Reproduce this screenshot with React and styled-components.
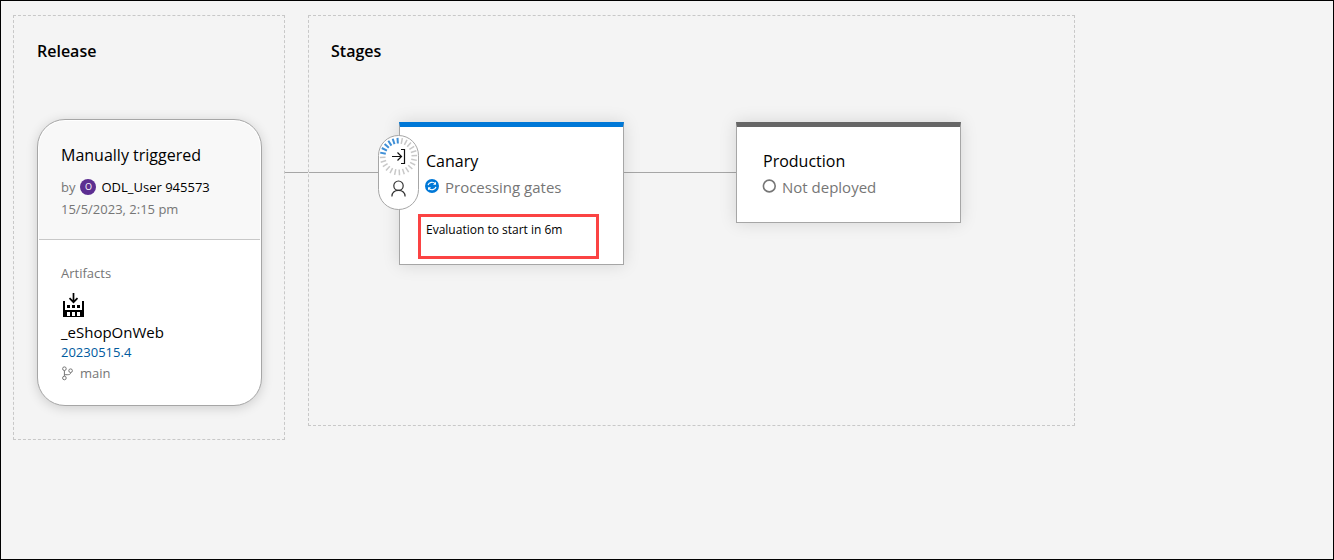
import React from 'react';
import styled, { createGlobalStyle } from 'styled-components';

const GlobalStyle = createGlobalStyle`
  *, *::before, *::after { box-sizing: border-box; }
  body {
    margin: 0;
    background: #f4f4f4;
    color: #000;
    font-family: "Open Sans", "Noto Sans", sans-serif;
    font-size: 13px;
    line-height: 20px;
  }
  h1, h2, h3, p { margin: 0; }
`;

const Page = styled.main`
  min-height: 100vh;
  padding: 14px 12px;
  border: 1px solid #000;
  overflow-x: auto;
`;

const Pipeline = styled.div`
  display: flex;
  align-items: flex-start;
`;

const Panel = styled.section`
  flex: none;
  padding: 23px ${(p) => p.$right} ${(p) => p.$bottom} 0;
  border: 1px dashed #c8c8c8;
`;

const PanelTitle = styled.h2`
  padding-left: ${(p) => p.$indent};
  margin-bottom: 56px;
  font-size: 16px;
  font-weight: 600;
  line-height: 24px;
`;

const Track = styled.div`
  display: flex;
  align-items: flex-start;
`;

const Connector = styled.div`
  flex: none;
  width: ${(p) => p.$length};
  height: 1px;
  margin-top: ${(p) => p.$top};
  background: #a6a6a6;
`;

const ReleaseCard = styled.article`
  width: 225px;
  margin-left: 23px;
  border: 1px solid #a6a6a6;
  border-radius: 28px;
  background: #fff;
  box-shadow: 0 2px 12px rgba(0, 0, 0, 0.16);
`;

const Trigger = styled.div`
  margin: 1px;
  padding: 22px 22px 20px;
  border-bottom: 1px solid #c8c8c8;
  border-radius: 26px 26px 0 0;
  background: #f8f8f8;
`;

const CardTitle = styled.h3`
  font-size: 16px;
  font-weight: 400;
  line-height: 24px;
`;

const Byline = styled.p`
  display: flex;
  align-items: center;
  gap: 5px;
  margin-top: 10px;
  color: #767676;
`;

const Avatar = styled.span`
  width: 16px;
  height: 16px;
  border-radius: 50%;
  background: #5c2e91;
  color: #fff;
  font-size: 9px;
  line-height: 16px;
  text-align: center;
`;

const UserName = styled.span`
  color: #000;
`;

const Muted = styled.p`
  margin-top: 2px;
  color: #767676;
`;

const Artifacts = styled.div`
  padding: 20px 23px 22px;
`;

const ArtifactIcon = styled.svg`
  display: block;
  margin-top: 9px;
`;

const ArtifactName = styled.p`
  margin-top: 5px;
  font-size: 15px;
`;

const BuildLink = styled.a`
  display: block;
  color: #005a9e;
  text-decoration: none;
`;

const Branch = styled.p`
  display: flex;
  align-items: center;
  gap: 7px;
  margin-top: 1px;
  color: #767676;
`;

const StageCard = styled.article`
  position: relative;
  flex: none;
  width: 225px;
  margin-top: 3px;
  padding: 22px 0 ${(p) => p.$bottom};
  border: 1px solid #a6a6a6;
  border-top: 5px solid ${(p) => p.$accent};
  background: #fff;
  box-shadow: 0 0 16px rgba(0, 0, 0, 0.13);
`;

const StageTitle = styled(CardTitle)`
  padding: 0 26px;
`;

const Status = styled.p`
  display: flex;
  align-items: center;
  gap: 6px;
  margin-top: 4px;
  padding: 0 26px 0 25px;
  color: #767676;
  font-size: 15px;

  svg { flex: none; }
`;

const Notice = styled.p`
  margin: 17px 24px 0 18px;
  padding: 3px 5px 16px;
  border: 3px solid #fb4343;
  font-size: 12px;
  font-weight: 370;
`;

const Conditions = styled.div`
  position: absolute;
  top: 8px;
  left: -22px;
  display: flex;
  flex-direction: column;
  width: 41px;
  height: 75px;
  border: 1px solid #a6a6a6;
  border-radius: 21px;
  background: #fff;
`;

const ConditionButton = styled.button`
  display: block;
  height: ${(p) => p.$height};
  padding: 0;
  border: 0;
  background: none;
  cursor: pointer;

  svg { display: block; margin: 0 auto; }
`;

const TICKS = 24;
const ACTIVE_TICKS = 6;

function GatesIcon() {
  return (
    <svg width="39" height="40" viewBox="0 0 39 40" fill="none" aria-hidden="true">
      {Array.from({ length: TICKS }, (_, i) => (
        <line
          key={i}
          x1="19.5"
          y1="1.8"
          x2="19.5"
          y2="7.5"
          stroke={i < ACTIVE_TICKS ? '#3f8fd6' : '#c8c8c8'}
          strokeWidth={i < ACTIVE_TICKS ? 2 : 1.5}
          transform={`rotate(${(i * -360) / TICKS - 3} 19.5 20.5)`}
        />
      ))}
      <path d="M13 20.5H22.5M18.5 16.5L22.5 20.5L18.5 24.5M22 13.5H25.5V27.5H22" stroke="#111" strokeWidth="1.2" />
    </svg>
  );
}

function ApproverIcon() {
  return (
    <svg width="16" height="17" viewBox="0 0 16 17" fill="none" stroke="#333" strokeWidth="1.2" aria-hidden="true">
      <circle cx="7.5" cy="5.7" r="4.7" />
      <path d="M0.9 16.5C1.1 12.6 3.9 10.4 7.5 10.4S13.9 12.6 14.1 16.5" />
    </svg>
  );
}

function RunningIcon() {
  return (
    <svg width="14" height="20" viewBox="0 0 14 20" fill="none" aria-hidden="true">
      <circle cx="7" cy="9" r="7" fill="#0078d7" />
      <path d="M3 8.2C3.8 5.2 8 4.2 10.2 6.6M11 9.8C10.2 12.8 6 13.8 3.8 11.4" stroke="#fff" strokeWidth="1.2" />
      <path d="M11 4.8V7.8H8ZM3 13.2V10.2H6Z" fill="#fff" />
    </svg>
  );
}

function IdleIcon() {
  return (
    <svg width="14" height="20" viewBox="0 0 14 20" fill="none" aria-hidden="true">
      <circle cx="7.3" cy="9" r="5.9" stroke="#767676" strokeWidth="1.6" />
    </svg>
  );
}

function BranchIcon() {
  return (
    <svg width="12" height="15" viewBox="0 0 12 15" fill="none" stroke="#767676" aria-hidden="true">
      <circle cx="3.4" cy="2.7" r="1.8" />
      <circle cx="3.4" cy="12" r="1.8" />
      <circle cx="9.6" cy="4.7" r="1.8" />
      <path d="M3.4 4.6V10.1M9.6 6.6C9.6 9 7.8 8.7 3.4 8.7" />
    </svg>
  );
}

function BuildIcon() {
  return (
    <ArtifactIcon width="23" height="25" viewBox="0 0 23 25" aria-hidden="true">
      <path d="M12.5 1V10M8.5 6.2L12.5 10.2L16.5 6.2" fill="none" stroke="#000" strokeWidth="1.7" />
      <path
        fillRule="evenodd"
        d="M2 9H4V18H21V9H23V25H2ZM6 20V24H9V20ZM11 20V24H14V20ZM16 20V24H19V20Z"
      />
      <path d="M6 13H9V16H6ZM11 13H14V16H11ZM16 13H19V16H16Z" />
    </ArtifactIcon>
  );
}

export default function App() {
  return (
    <>
      <GlobalStyle />
      <Page>
        <Pipeline>
          <Panel $right="22px" $bottom="33px">
            <PanelTitle $indent="23px">Release</PanelTitle>
            <ReleaseCard>
              <Trigger>
                <CardTitle>Manually triggered</CardTitle>
                <Byline>
                  by <Avatar>O</Avatar> <UserName>ODL_User 945573</UserName>
                </Byline>
                <Muted>15/5/2023, 2:15 pm</Muted>
              </Trigger>
              <Artifacts>
                <Muted>Artifacts</Muted>
                <BuildIcon />
                <ArtifactName>_eShopOnWeb</ArtifactName>
                <BuildLink href="#build">20230515.4</BuildLink>
                <Branch>
                  <BranchIcon /> main
                </Branch>
              </Artifacts>
            </ReleaseCard>
          </Panel>

          <Connector $length="23px" $top="157px" />

          <Panel $right="113px" $bottom="160px">
            <PanelTitle $indent="22px">Stages</PanelTitle>
            <Track>
              <Connector $length="90px" $top="53px" />
              <StageCard $accent="#0078d7" $bottom="5px">
                <StageTitle>Canary</StageTitle>
                <Status>
                  <RunningIcon /> Processing gates
                </Status>
                <Notice>Evaluation to start in 6m</Notice>
                <Conditions>
                  <ConditionButton type="button" $height="40px" aria-label="Pre-deployment gates">
                    <GatesIcon />
                  </ConditionButton>
                  <ConditionButton type="button" $height="25px" aria-label="Pre-deployment approvers">
                    <ApproverIcon />
                  </ConditionButton>
                </Conditions>
              </StageCard>
              <Connector $length="112px" $top="53px" />
              <StageCard $accent="#666" $bottom="25px">
                <StageTitle>Production</StageTitle>
                <Status>
                  <IdleIcon /> Not deployed
                </Status>
              </StageCard>
            </Track>
          </Panel>
        </Pipeline>
      </Page>
    </>
  );
}
